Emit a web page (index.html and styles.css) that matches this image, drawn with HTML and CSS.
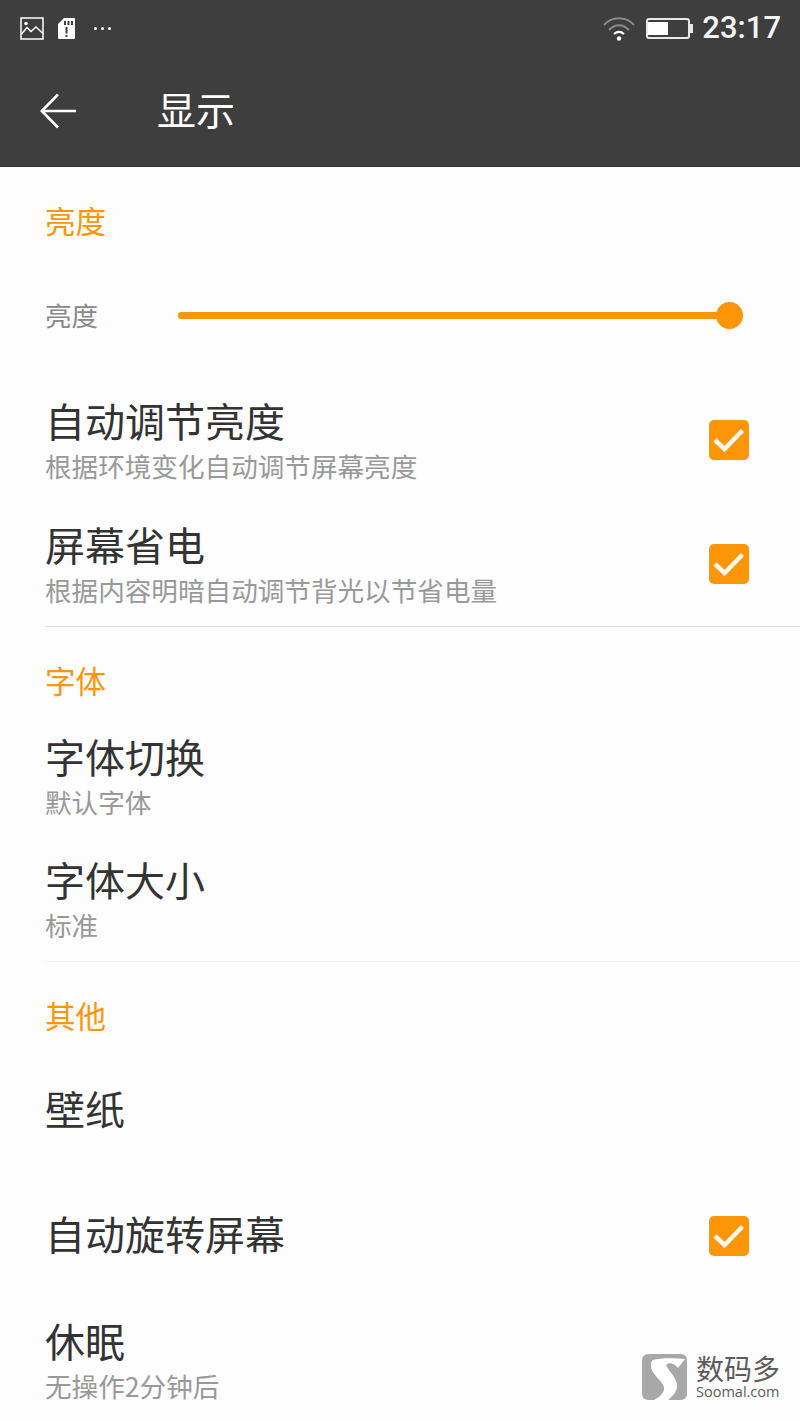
FILE: index.html
```html
<!DOCTYPE html>
<html lang="zh-CN">
<head>
    <meta charset="UTF-8">
    <meta name="viewport" content="width=device-width, initial-scale=1.0">
    <title>显示</title>
    <link rel="stylesheet" href="styles.css">
</head>
<body>
    <div class="phone">
        <header class="appbar">
            <div class="statusbar">
                <div class="status-left">
                    <svg class="icon-image" viewBox="0 0 24 23" fill="none" stroke="#fff">
                        <rect x="1" y="1" width="22" height="21" stroke-width="1.5"/>
                        <circle cx="6" cy="6.5" r="1.8" fill="#fff" stroke="none"/>
                        <path d="M1.5 17 L7 10.5 L11 14.5 L16 10 L22.5 16" stroke-width="1.5"/>
                    </svg>
                    <svg class="icon-sd" viewBox="0 0 17 21">
                        <path fill="#fff" d="M6 0 H16 a1 1 0 0 1 1 1 V20 a1 1 0 0 1 -1 1 H1 a1 1 0 0 1 -1 -1 V6 Z"/>
                        <path fill="#3e3e3e" d="M6 3 h2 v4 h-2 Z M9.5 3 h2 v4 h-2 Z M13 3 h2 v4 h-2 Z M7.5 9 h2 v6.500 h-2 Z M7.500 17 h2 v2 h-2 Z"/>
                    </svg>
                    <div class="dots"><span></span><span></span><span></span></div>
                </div>
                <div class="status-right">
                    <svg class="icon-wifi" viewBox="0 0 32 25" fill="none">
                        <path d="M1 9 C9 0 23 0 31 9" stroke="#8a8a8a" stroke-width="2"/>
                        <path d="M6 14 C12 7.500 20 7.500 26 14" stroke="#8a8a8a" stroke-width="2"/>
                        <path d="M11 18 C14 15.500 18 15.500 21 18" stroke="#fff" stroke-width="2.200"/>
                        <circle cx="16" cy="22.500" r="2.200" fill="#fff"/>
                    </svg>
                    <div class="battery">
                        <div class="battery-body"><div class="battery-level"></div></div>
                        <div class="battery-tip"></div>
                    </div>
                    <span class="clock">23:17</span>
                </div>
            </div>
            <div class="toolbar">
                <svg class="icon-back" viewBox="0 0 36 36" fill="none" stroke="#fff" stroke-width="2.600">
                    <path d="M36 18 H2 M18 1.500 L1.800 18 L18 34.500"/>
                </svg>
                <h1 class="toolbar-title">显示</h1>
            </div>
        </header>

        <main class="settings">
            <h2 class="section-title section-first">亮度</h2>
            <div class="row">
                <span class="slider-label">亮度</span>
                <div class="slider"><div class="slider-thumb"></div></div>
            </div>
            <div class="row">
                <div class="row-text two-line">
                    <div class="row-title">自动调节亮度</div>
                    <div class="row-sub">根据环境变化自动调节屏幕亮度</div>
                </div>
                <div class="checkbox"><svg viewBox="0 0 40 40"><path d="M6 20 L15.500 29 L33.500 10.500"/></svg></div>
            </div>
            <div class="row">
                <div class="row-text two-line">
                    <div class="row-title">屏幕省电</div>
                    <div class="row-sub">根据内容明暗自动调节背光以节省电量</div>
                </div>
                <div class="checkbox"><svg viewBox="0 0 40 40"><path d="M6 20 L15.500 29 L33.500 10.500"/></svg></div>
            </div>
            <div class="divider"></div>

            <h2 class="section-title section-fonts">字体</h2>
            <div class="row row-tight">
                <div class="row-text two-line">
                    <div class="row-title">字体切换</div>
                    <div class="row-sub">默认字体</div>
                </div>
            </div>
            <div class="row row-tight">
                <div class="row-text two-line">
                    <div class="row-title">字体大小</div>
                    <div class="row-sub">标准</div>
                </div>
            </div>
            <div class="divider divider-faint"></div>

            <h2 class="section-title section-last">其他</h2>
            <div class="row row-wide">
                <div class="row-text">
                    <div class="row-title">壁纸</div>
                </div>
            </div>
            <div class="row">
                <div class="row-text">
                    <div class="row-title">自动旋转屏幕</div>
                </div>
                <div class="checkbox"><svg viewBox="0 0 40 40"><path d="M6 20 L15.500 29 L33.500 10.500"/></svg></div>
            </div>
            <div class="row">
                <div class="row-text two-line">
                    <div class="row-title">休眠</div>
                    <div class="row-sub">无操作2分钟后</div>
                </div>
            </div>
        </main>

        <div class="watermark">
            <svg class="watermark-logo" viewBox="0 0 45 46">
                <rect width="45" height="46" rx="6" fill="#a8a8a8"/>
                <path fill="#fff" d="M11 6 C18 4 32 4 43 5 L36 14 C33 10 28 8 25 10 C22 13 33 20 35 30 C36 37 31 42 26 46 L12 46 C18 43 23 38 22 33 C20 26 9 20 9 12 C9 9 9 7 11 6 Z"/>
            </svg>
            <div class="watermark-text">
                <div class="watermark-name">数码多</div>
                <div class="watermark-url">Soomal.com</div>
            </div>
        </div>
    </div>
</body>
</html>
```

FILE: styles.css
```css
* {
    box-sizing: border-box;
}

html, body {
    margin: 0;
    height: 100%;
}

body {
    font-family: "Noto Sans CJK SC", "Noto Sans", sans-serif;
    background-color: #fdfdfd;
    color: #333;
    overflow: hidden;
}

.phone {
    position: relative;
    width: 800px;
    height: 1422px;
    overflow: hidden;
}

/* top bars */
.appbar {
    height: 167px;
    background-color: #3e3e3e;
    border-bottom: 1px solid #333;
}

.statusbar {
    height: 56px;
    display: flex;
    justify-content: space-between;
    align-items: center;
    padding: 0 19px 0 20px;
}

.status-left, .status-right {
    display: flex;
    align-items: center;
}

.icon-image {
    width: 24px;
    height: 23px;
}

.icon-sd {
    width: 17px;
    height: 21px;
    margin-left: 14px;
}

.dots {
    display: flex;
    gap: 4px;
    margin-left: 19px;
}

.dots span {
    width: 3px;
    height: 3px;
    border-radius: 50%;
    background-color: #fff;
}

.icon-wifi {
    width: 32px;
    height: 25px;
}

.battery {
    display: flex;
    align-items: center;
    margin-left: 11px;
}

.battery-body {
    width: 44px;
    height: 21px;
    border: 2px solid #e8e8e8;
    border-radius: 3px;
    padding: 2px 2px 2px 0;
}

.battery-level {
    width: 20px;
    height: 100%;
    background-color: #fff;
}

.battery-tip {
    width: 3px;
    height: 9px;
    background-color: #e8e8e8;
}

.clock {
    font-family: "Roboto", sans-serif;
    font-size: 31px;
    font-weight: 500;
    color: #f4f4f4;
    margin-left: 9px;
    line-height: 40px;
}

.toolbar {
    height: 110px;
    display: flex;
    align-items: center;
    padding-left: 40px;
}

.icon-back {
    width: 36px;
    height: 36px;
}

.toolbar-title {
    margin: 0 0 6px 81px;
    font-size: 39px;
    font-weight: 400;
    color: #fff;
}

/* list */
.section-title {
    margin: 0;
    height: 88px;
    padding: 31px 0 0 45px;
    font-size: 30.6px;
    line-height: 44px;
    font-weight: 400;
    color: #fd9508;
}

.section-first {
    height: 87px;
}

.section-fonts {
    height: 87px;
}

.section-last {
    height: 86px;
}

.row {
    height: 124px;
    display: flex;
    align-items: center;
    justify-content: space-between;
    padding: 0 51px 0 45px;
}

.row-tight {
    height: 123px;
}

.row-wide {
    height: 126px;
}

.row-text {
    margin-bottom: 6px;
}

.row-text.two-line {
    margin-bottom: 0;
    padding-top: 6px;
}

.row-title {
    font-size: 40px;
    line-height: 46px;
    color: #333;
}

.row-sub {
    font-size: 26.6px;
    line-height: 46px;
    color: #999;
}

.checkbox {
    width: 40px;
    height: 40px;
    border-radius: 5px;
    background-color: #fd9508;
}

.checkbox svg {
    display: block;
    width: 40px;
    height: 40px;
    fill: none;
    stroke: #fff8ec;
    stroke-width: 4.5;
}

.slider-label {
    font-size: 26.6px;
    color: #888;
    width: 133px;
    margin-bottom: 4px;
}

.slider {
    position: relative;
    flex: 1;
    height: 7px;
    margin-right: 19px;
    margin-bottom: 1px;
    background-color: #fd9508;
    border-radius: 3px;
}

.slider-thumb {
    position: absolute;
    right: -13px;
    top: -10px;
    width: 27px;
    height: 27px;
    border-radius: 50%;
    background-color: #fd9508;
}

.divider {
    height: 1px;
    margin-left: 45px;
    background-color: #dcdcdc;
}

.divider-faint {
    margin-top: 1px;
    background-color: #f2f2f2;
}

/* watermark sits over the last row */
.watermark {
    position: absolute;
    left: 642px;
    top: 1354px;
    display: flex;
    gap: 9px;
    color: #666;
}

.watermark-logo {
    width: 45px;
    height: 46px;
}

.watermark-name {
    font-size: 28px;
    line-height: 29px;
    color: #5c5c5c;
}

.watermark-url {
    font-family: "Open Sans", sans-serif;
    font-size: 14.5px;
    line-height: 17px;
    color: #5c5c5c;
}
```
